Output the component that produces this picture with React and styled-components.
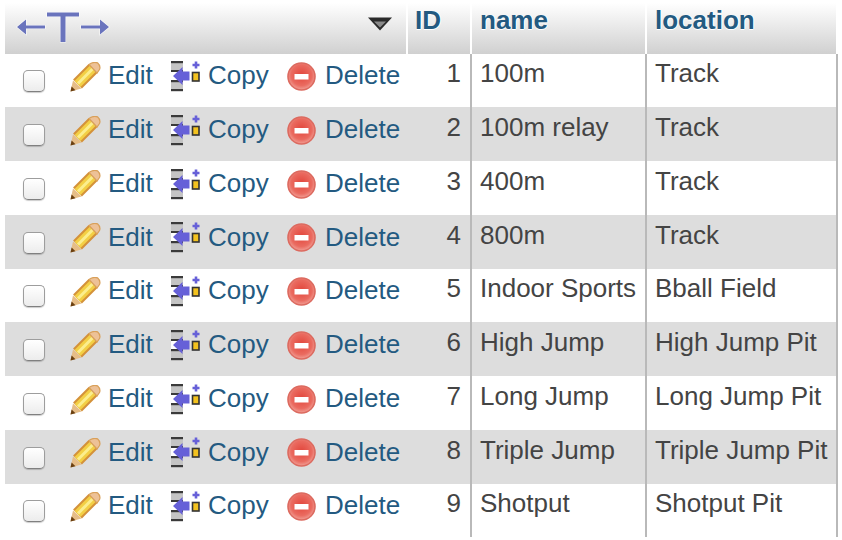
import styled, { createGlobalStyle } from 'styled-components';

const GlobalStyle = createGlobalStyle`
  html, body { margin: 0; padding: 0; background: #fff; }
  body { font-family: "Liberation Sans", Arial, sans-serif; }
`;

const Page = styled.div`
  width: 842px;
  height: 540px;
  overflow: hidden;
  padding: 3px 0 0 5px;
  box-sizing: border-box;
`;

const HeaderRow = styled.div`
  display: grid;
  grid-template-columns: 401px 62px 173px 189px;
  column-gap: 2px;
  width: 831px;
  height: 50.5px;
`;

const HeaderCell = styled.div`
  background: linear-gradient(#fff, #d0d0d0);
  color: #235a81;
  font-size: 26px;
  font-weight: bold;
  line-height: 34px;
  padding-left: ${({ $pad }) => $pad}px;
  text-shadow: 1px 0 0 #fff, 0 1px 0 #fff;
`;

const ToolCell = styled(HeaderCell)`
  display: flex;
  justify-content: space-between;
  align-items: flex-start;
  padding: 8px 14px 0 7px;
`;

const Row = styled.div`
  display: grid;
  grid-template-columns: 465px 175px 193px;
  width: 833px;
  height: 53.75px;
  background: ${({ $odd }) => ($odd ? '#ddd' : '#fff')};
`;

const Cell = styled.div`
  color: #444;
  font-size: 26px;
  line-height: 30px;
  padding: 4.85px 0 0 8px;
  border-left: 2px solid #b9b9b9;
  white-space: nowrap;
  &:last-child {
    border-right: 2px solid #b9b9b9;
  }
`;

const ActionCell = styled.div`
  display: flex;
  align-items: flex-start;
  padding-top: 6.8px;
  position: relative;
`;

const Check = styled.span`
  flex: none;
  width: 20px;
  height: 20px;
  margin: 10px 25px 0 18px;
  border: 1px solid #9d9d9d;
  border-bottom-color: #808080;
  border-radius: 5px;
  background: linear-gradient(#fff, #ececec);
  box-shadow: 0 1px 1px rgba(0, 0, 0, 0.2);
`;

const Action = styled.a`
  display: flex;
  align-items: flex-start;
  flex: none;
  width: ${({ $width }) => $width}px;
  color: #235a81;
  font-size: 26px;
  line-height: 30px;
  text-decoration: none;
`;

const ActionIcon = styled.svg`
  flex: none;
  margin: ${({ $top }) => $top}px ${({ $gap }) => $gap}px 0 0;
  filter: blur(0.45px);
`;

const RowId = styled.span`
  position: absolute;
  right: 9px;
  top: 4.85px;
  color: #444;
  font-size: 26px;
  line-height: 30px;
`;

const SortIcon = () => (
  <svg width="104" height="36" viewBox="0 0 104 36">
    <path
      d="M35 1.5 H67 V5.5 H53.5 V31 H48.5 V5.5 H35 Z M5 16 L14 8.5 V14.5 H33 V17.5 H14 V23.5 Z M69 14.5 H88 V8.5 L97 16 L88 23.5 V17.5 H69 Z"
      fill="#6a74bd"
      stroke="#fff"
      strokeOpacity="0.75"
      strokeWidth="1.2"
      paintOrder="stroke"
    />
  </svg>
);

const Triangle = () => (
  <svg width="24" height="14" viewBox="0 0 24 14" style={{ marginTop: 6 }}>
    <path d="M0 0.5 H24 L12 13.5 Z" fill="#2a2a2a" />
    <path d="M6 4.5 H18 L12 10.5 Z" fill="#8a8a8a" />
  </svg>
);

const PencilIcon = () => (
  <ActionIcon $top={1.8} $gap={7} width="31" height="30" viewBox="0 0 31 30">
    <path d="M0.5 29.5 L3 18.5 L11.5 26.5 Z" fill="#e6bd87" />
    <path d="M0.5 29.5 L1.6 24.5 L5.5 28.3 Z" fill="#6a3f10" />
    <path d="M7.5 22 L23 6.5" stroke="#d4923a" strokeWidth="12.5" />
    <path d="M7.5 22 L23 6.5" stroke="#f3cf45" strokeWidth="8.5" />
    <path d="M8 21.5 L23 6.5" stroke="#fbee8e" strokeWidth="3" />
    <path d="M19 2.5 Q23 -0.5 27.5 0.8 Q31 4 29.5 7.5 L27 11 Z" fill="#edc197" stroke="#d9a05a" strokeWidth="1.2" />
  </ActionIcon>
);

const CopyIcon = () => (
  <ActionIcon $top={0.8} $gap={7} width="30" height="31" viewBox="0 0 30 31">
    <rect x="0" y="0" width="12" height="30" fill="#c4c4c4" />
    <g fill="#3a3a3a">
      <rect x="0" y="0" width="12" height="2.2" />
      <rect x="0" y="9" width="12" height="2.2" />
      <rect x="0" y="19" width="12" height="2.2" />
      <rect x="0" y="28" width="12" height="2.2" />
    </g>
    <rect x="0" y="11" width="6" height="8" fill="#fff" />
    <path d="M2 15 L11.5 6 V10.5 H18.5 V19.5 H11.5 V24 Z" fill="#6660d8" />
    <rect x="21.5" y="11.5" width="6.5" height="8.5" fill="#f3c21e" stroke="#333" strokeWidth="1.6" />
    <path d="M25 0.5 v7 M21.5 4 h7" stroke="#6660d8" strokeWidth="2.6" />
  </ActionIcon>
);

const DeleteIcon = () => (
  <ActionIcon $top={1.8} $gap={8} width="30" height="30" viewBox="0 0 30 30">
    <defs>
      <radialGradient id="deleteFill" cx="50%" cy="45%" r="55%">
        <stop offset="0%" stopColor="#e2463c" />
        <stop offset="70%" stopColor="#ea6b60" />
        <stop offset="100%" stopColor="#f1a097" />
      </radialGradient>
    </defs>
    <circle cx="14.5" cy="14.5" r="13.5" fill="url(#deleteFill)" stroke="#dc6a5f" strokeWidth="1.6" />
    <rect x="7.5" y="12" width="14" height="5.5" fill="#fff" />
  </ActionIcon>
);

const rows = [
  [1, '100m', 'Track'],
  [2, '100m relay', 'Track'],
  [3, '400m', 'Track'],
  [4, '800m', 'Track'],
  [5, 'Indoor Sports', 'Bball Field'],
  [6, 'High Jump', 'High Jump Pit'],
  [7, 'Long Jump', 'Long Jump Pit'],
  [8, 'Triple Jump', 'Triple Jump Pit'],
  [9, 'Shotput', 'Shotput Pit'],
];

export default function App() {
  return (
    <Page>
      <GlobalStyle />
      <HeaderRow>
        <ToolCell>
          <SortIcon />
          <Triangle />
        </ToolCell>
        <HeaderCell $pad={7}>ID</HeaderCell>
        <HeaderCell $pad={8}>name</HeaderCell>
        <HeaderCell $pad={8}>location</HeaderCell>
      </HeaderRow>
      {rows.map(([id, name, location], i) => (
        <Row key={id} $odd={i % 2 === 1}>
          <ActionCell>
            <Check />
            <Action href="#" $width={101}><PencilIcon />Edit</Action>
            <Action href="#" $width={116}><CopyIcon />Copy</Action>
            <Action href="#"><DeleteIcon />Delete</Action>
            <RowId>{id}</RowId>
          </ActionCell>
          <Cell>{name}</Cell>
          <Cell>{location}</Cell>
        </Row>
      ))}
    </Page>
  );
}
